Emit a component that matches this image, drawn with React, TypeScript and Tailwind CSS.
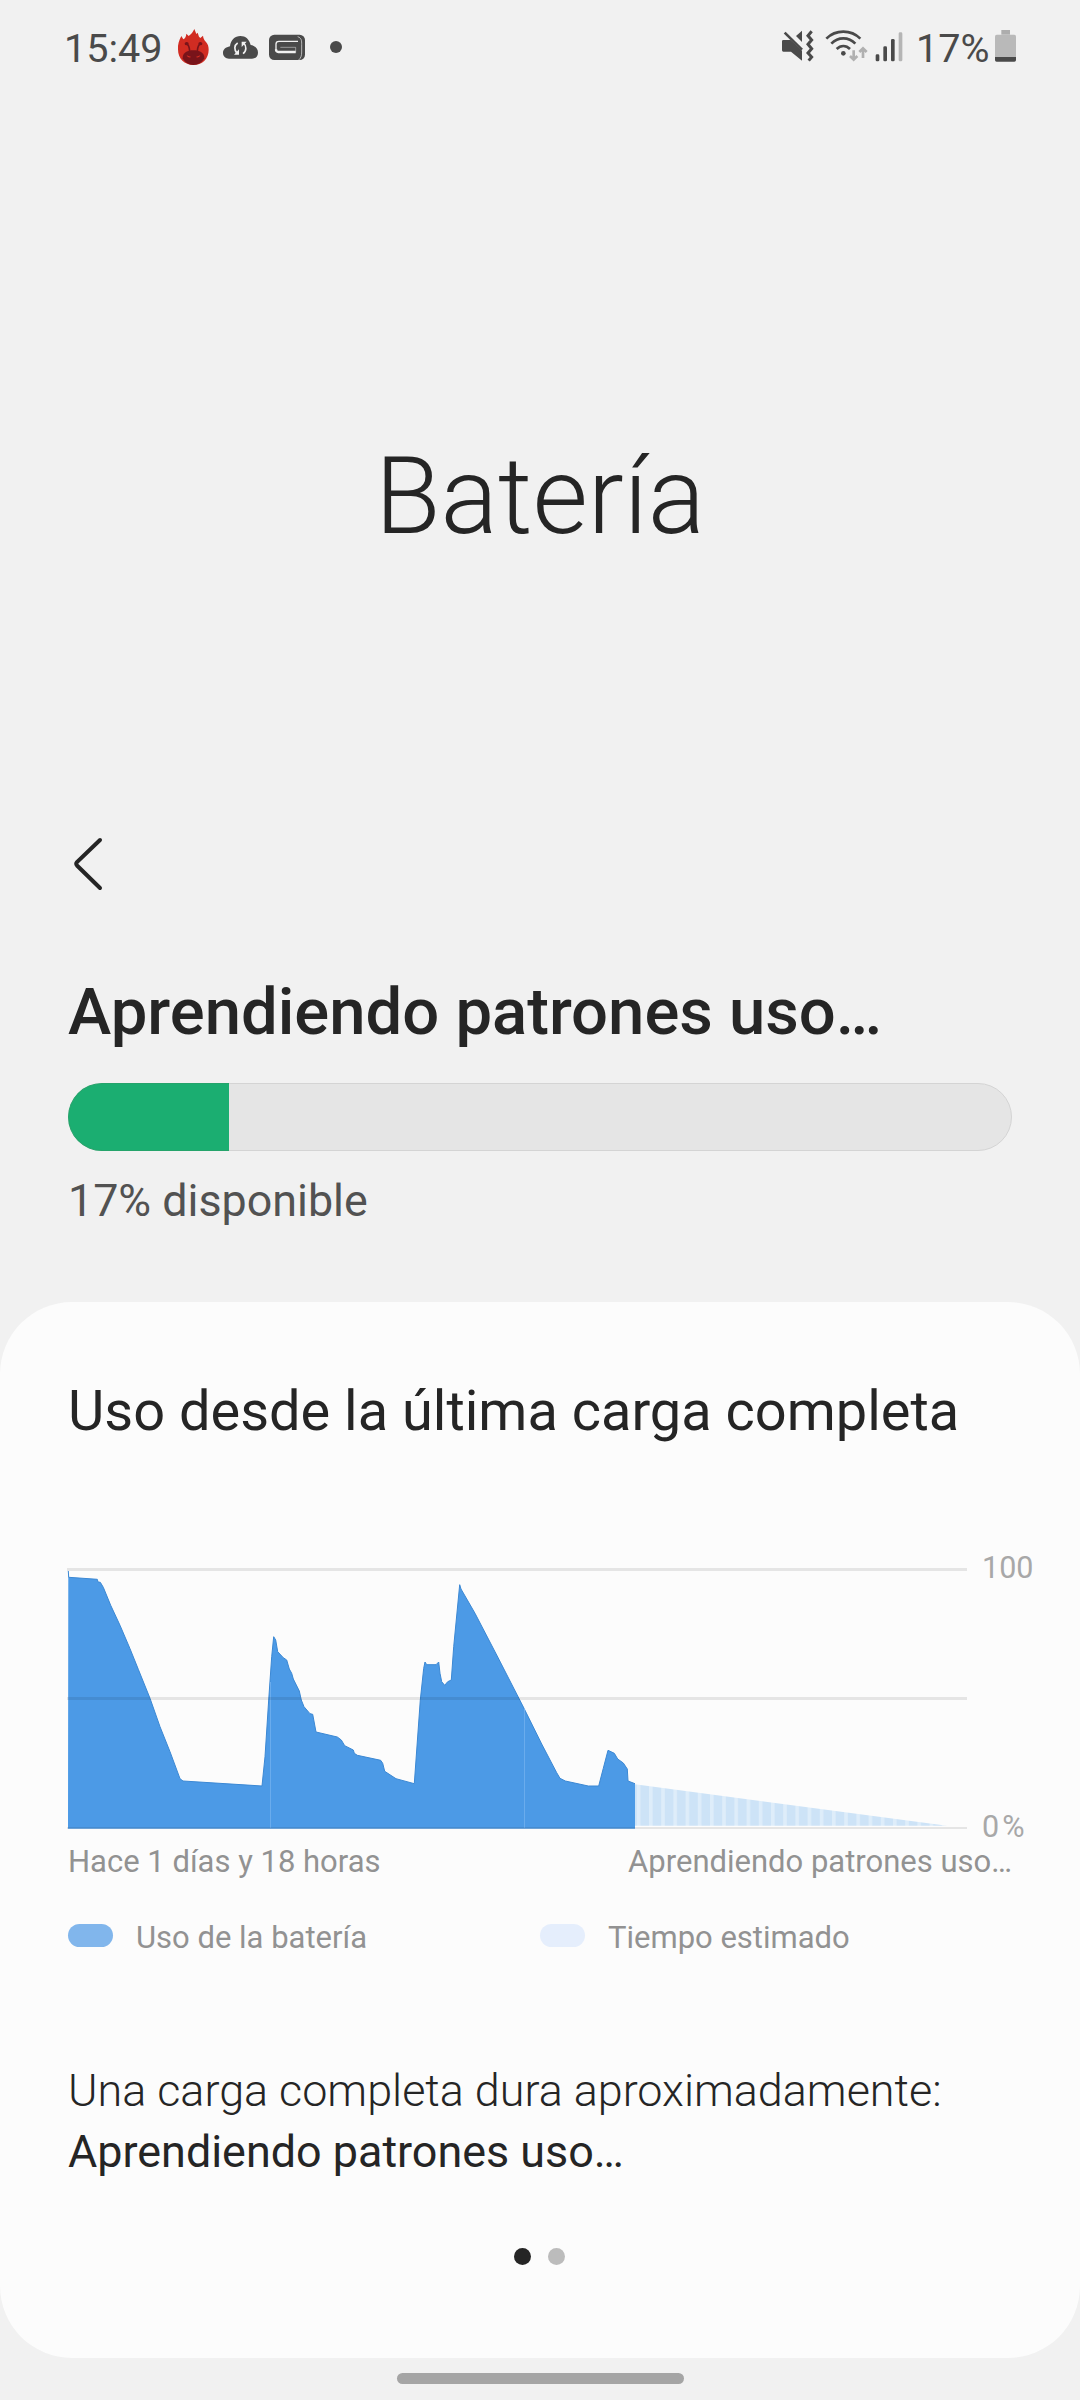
const levels =
  "1.3,22 1.7,28.3 30.3,30.3 31,33 33.3,33.3 36.3,38.3 43.7,56.3 53,76.3 63,99.7 71.3,120.3 83,149.3 93,177.7 103,202.7 113,229.7 116,232 195,237 " +
  "198,207.7 201.7,151 204.7,107.7 206.7,87.7 208.7,91 210.7,102.7 216.3,108.7 219.7,111 222.3,120 224.7,124.3 226.3,130 232.3,142 234.3,151 237,157.7 243,164.7 245.7,165.3 249,183 270.3,188 274.3,191 277.7,196.7 286.3,201 287.3,204.3 290.3,206.3 " +
  "313.7,211.3 315.7,214.3 317.7,222.3 329,229.7 347.3,234.7 353.3,151 356.7,119.3 358,113 359.7,115.7 369,115.7 371.7,113 373,124.3 374.7,132.7 377.7,136.3 380.7,132.7 384.3,131 386.7,97.7 392.7,35.7 394,40 " +
  "408,64.3 429.7,106 457,159.3 474.7,195 489.7,223.7 493,229.3 498.3,232 521.3,237 531.7,237 536.3,219.3 541,201.3 547.3,204.3 550.7,210 556.3,214 560.3,220 561,232 568,234.7";

const legend = [
  { label: "Uso de la batería", swatch: "bg-[#81b6ec]" },
  { label: "Tiempo estimado", swatch: "bg-[#e5eefc]" },
];

function StatusBar() {
  return (
    <header className="flex h-24 justify-between pt-[10px] pr-[64px] pb-[6px] pl-[64px] text-[39.6px] leading-[80px] text-[#4a4a4a]">
      <div className="flex items-center">
        <span className="w-[113px] pb-[3px]">15:49</span>
        {/* AnTuTu */}
        <svg viewBox="0 0 96 240" className="h-20 w-8">
          <path
            d="M3 118C2 103 6 92 13 78L19 88C25 84 27 80 28 71L35 78C43 72 48 66 52 57L58 72L62 68L66 80L70 84L78 77C79 86 82 90 87 96C93 103 95 110 95 119C95 147 75 165 49 165C23 165 3 147 3 118Z"
            fill="#d12c22"
          />
          <path
            d="M17 145C16 128 33 121 49 121C66 121 83 128 82 145C74 159 62 165 49 165C36 165 25 159 17 145Z"
            fill="#79141a"
          />
          <path d="M28 101C34 103 37 110 38 123M71 101C65 103 62 110 61 123" fill="none" stroke="#79141a" strokeWidth="5" />
          <ellipse cx="29" cy="101" rx="6" ry="5" fill="#79141a" />
          <ellipse cx="70" cy="101" rx="6" ry="5" fill="#79141a" />
          <path d="M29 136l14 5c-6 3-12 1-14-5zM70 136l-14 5c6 3 12 1 14-5z" fill="#d12c22" />
        </svg>
        {/* cloud sync */}
        <svg viewBox="0 0 108 240" className="ml-3.5 h-20 w-9">
          <path
            d="M18 146C8 146 0 139 0 129C0 118 8 112 21 109C23 90 36 78 52 78C68 78 79 88 83 105C96 107 105 116 105 128C105 139 97 146 87 146Z"
            fill="#4a4a4a"
          />
          <g fill="none" stroke="#f1f1f1" strokeWidth="5">
            <path d="M44 99C33 106 33 120 42 130" />
            <path d="M60 131C71 124 71 108 62 99" />
          </g>
          <path d="M48 118v16H33zM56 111V95h15z" fill="#f1f1f1" />
        </svg>
        <svg viewBox="0 0 108 240" className="ml-[10px] h-20 w-9">
          <rect y="74" width="108" height="76" rx="16" fill="#4a4a4a" />
          <g fill="none" stroke="#f1f1f1">
            <path d="M87 94H30Q21 94 21 102V122" strokeWidth="4" />
            <path d="M21 118Q21 126 28 126H80" strokeWidth="7" />
            <path d="M80 128V112H34" strokeWidth="2" strokeOpacity="0.7" />
            <path d="M86 80C98 84 98 92 98 104V126C98 137 96 144 88 151" strokeWidth="2" />
          </g>
        </svg>
        <span className="mb-[6px] ml-[25px] size-3 rounded-full bg-[#4a4a4a]" />
      </div>

      <div className="flex items-center">
        {/* muted, vibrating */}
        <svg viewBox="0 0 96 240" className="h-20 w-8">
          <path d="M4 90H26L60 122V152L27 125H4Q0 125 0 121V94Q0 90 4 90Z" fill="#4a4a4a" />
          <path d="M42 78L60 62V96Z" fill="#4a4a4a" />
          <path d="M8 68L60 119" stroke="#4a4a4a" strokeWidth="8" />
          <path
            d="M89 64L78 77L89 90L78 103L89 116L78 129L89 141L80 152"
            fill="none"
            stroke="#4a4a4a"
            strokeWidth="9"
          />
        </svg>
        <svg viewBox="0 0 129 240" className="ml-[11px] h-20 w-[43px]">
          <g fill="none" stroke="#4a4a4a" strokeWidth="8">
            <path d="M4 86C32 58 78 58 106 86" />
            <path d="M19 101C39 80 71 80 91 101" />
            <path d="M35 117C47 105 63 105 75 117" />
          </g>
          <circle cx="55" cy="130" r="7" fill="#4a4a4a" />
          <g fill="none" stroke="#b0b0b0" strokeWidth="8">
            <path d="M86 121V149M75 138L86 149L97 138" />
            <path d="M114 144V115M103 126L114 115L125 126" />
          </g>
        </svg>
        <svg viewBox="0 0 84 240" className="ml-[7px] h-20 w-7">
          <g fill="#4a4a4a">
            <rect x="2" y="133" width="11" height="21" rx="4" />
            <rect x="25" y="109" width="11" height="45" rx="4" />
            <rect x="48" y="87" width="11" height="67" rx="4" />
          </g>
          <rect x="71" y="67" width="11" height="87" rx="4" fill="#b5b5b5" />
        </svg>
        <span className="ml-[13px] w-[79px] pb-[3px]">17%</span>
        <svg viewBox="0 0 63 240" className="h-20 w-[21px]">
          <path d="M19 60H45V74H19Z" fill="#adadad" />
          <path d="M5 74H58Q63 74 63 79V141H0V79Q0 74 5 74Z" fill="#b9b9b9" />
          <path d="M0 141H63V150Q63 155 58 155H5Q0 155 0 150Z" fill="#4a4a4a" />
        </svg>
      </div>
    </header>
  );
}

function UsageChart() {
  return (
    <div className="ml-[67px] flex h-[296px]">
      <svg viewBox="0 0 900 296" className="h-[296px] w-[900px]">
        <defs>
          <pattern id="estimate" x="569.8" width="12.2" height="296" patternUnits="userSpaceOnUse">
            <rect width="12.2" height="296" fill="#cde3f7" />
            <rect width="3.6" height="296" fill="#deedfa" />
          </pattern>
        </defs>
        <path d="M568 235.3L880 276.7H568Z" fill="url(#estimate)" />
        <polygon points={`1,279.7 ${levels} 568,279.7`} fill="#4c9ae6" />
        <polyline points={levels} fill="none" stroke="#3b88d4" />
        <path d="M203.5 133V279M457.5 160V279" stroke="#6aaced" />
        <g fill="#000" fillOpacity="0.09">
          <rect y="19" width="900" height="3" />
          <rect y="148" width="900" height="3" />
          <rect y="278" width="900" height="2" />
        </g>
      </svg>
      <div className="ml-[15px] flex flex-col justify-between pt-px text-[30.5px] leading-9 text-[#a8a8a8]">
        <span>100</span>
        <span className="flex gap-[3px]">
          <span>0</span>
          <span>%</span>
        </span>
      </div>
    </div>
  );
}

export default function App() {
  return (
    <div className="flex h-[2400px] w-[1080px] flex-col overflow-hidden bg-[#f1f1f1] font-['Roboto',sans-serif] whitespace-nowrap text-[#252525]">
      <StatusBar />

      <h1 className="mt-[335px] text-center text-[107px] leading-[132px] font-light">Batería</h1>

      <button aria-label="Atrás" className="mt-[271px] ml-[68px] h-[60px] w-10">
        <svg viewBox="0 0 40 60" className="h-[60px] w-10">
          <path
            d="M32 6L9 28Q7.5 29.8 9 31.5L32 54"
            fill="none"
            stroke="#252525"
            strokeWidth="4"
            strokeLinecap="round"
          />
        </svg>
      </button>

      <section className="mt-20 px-[68px]">
        <h2 className="text-[65.2px] leading-[76px] font-medium">Aprendiendo patrones uso…</h2>
        <div className="mt-[33px] flex h-[68px] rounded-full border border-[#d4d4d4] bg-[#e5e5e5]">
          <div className="-my-px -ml-px w-[161px] rounded-l-full border border-r-0 border-[#25a46b] bg-[#1bae71]" />
        </div>
        <p className="mt-[22px] text-[44.8px] leading-[56px] text-[#525252]">17% disponible</p>
      </section>

      <main className="mt-[73px] h-[1056px] rounded-[72px] bg-[#fcfcfc] pt-[76px]">
        <h3 className="mb-[105px] px-[68px] text-[55.95px] leading-[66px]">Uso desde la última carga completa</h3>
        <UsageChart />

        <div className="px-[68px] text-[31px] leading-9 text-[#929292]">
          <div className="-mt-px flex justify-between">
            <span>Hace 1 días y 18 horas</span>
            <span>Aprendiendo patrones uso…</span>
          </div>
          <div className="mt-10 grid grid-cols-2">
            {legend.map((item) => (
              <div key={item.label} className="flex items-center">
                <span className={`mb-[5px] h-[23px] w-[45px] rounded-full ${item.swatch}`} />
                <span className="ml-[23px]">{item.label}</span>
              </div>
            ))}
          </div>
        </div>

        <div className="mt-[104px] px-[68px] text-[44.9px] leading-[61px]">
          <p className="font-light">Una carga completa dura aproximadamente:</p>
          <p>Aprendiendo patrones uso…</p>
        </div>

        <div className="mt-[66px] mr-[2px] flex justify-center gap-[17px]">
          <span className="size-[17px] rounded-full bg-[#252525]" />
          <span className="size-[17px] rounded-full bg-[#bcbcbc]" />
        </div>
      </main>

      <div className="mx-auto mt-[15px] h-[11px] w-[287px] shrink-0 rounded-full bg-[#a5a5a5]" />
    </div>
  );
}
